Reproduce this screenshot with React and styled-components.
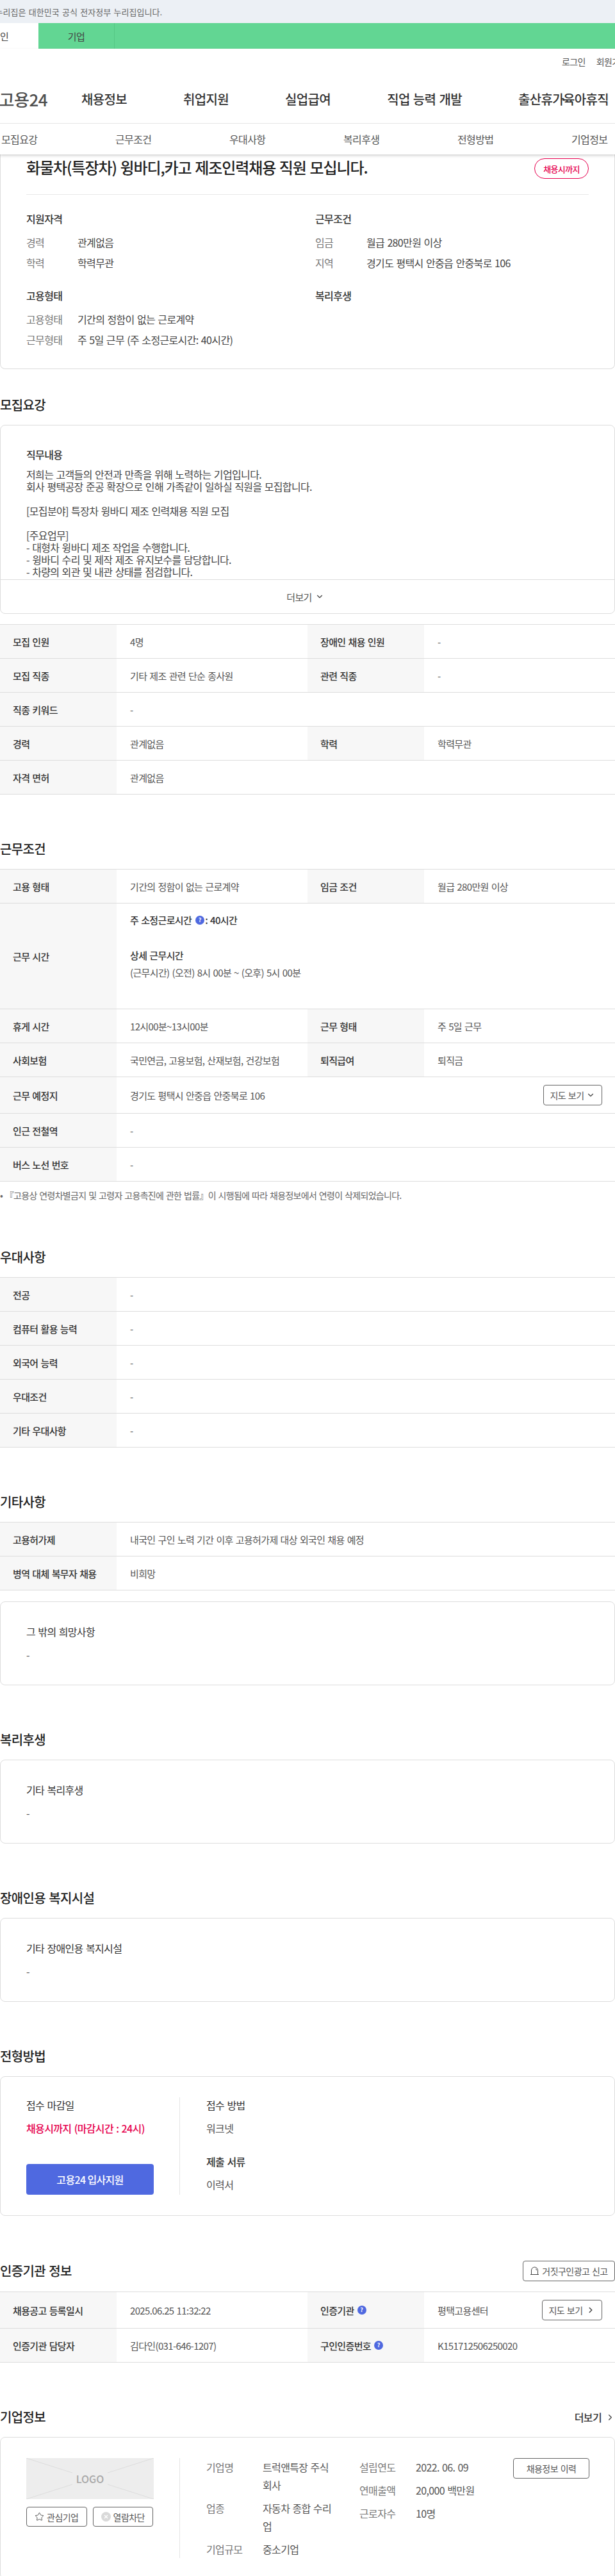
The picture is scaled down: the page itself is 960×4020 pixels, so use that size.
import React from "react";
import styled, { createGlobalStyle } from "styled-components";
import { ChevronDown, ChevronRight, Star } from "lucide-react";

const GlobalStyle = createGlobalStyle`
  html, body {
    margin: 0;
    padding: 0;
    background: #fff;
  }
  body {
    font-family: "Noto Sans CJK KR", "Noto Sans", sans-serif;
    color: #333;
    letter-spacing: -0.04em;
    word-spacing: 0.08em;
  }
  * {
    box-sizing: border-box;
  }
`;

const Page = styled.div`
  width: 960px;
  height: 4020px;
  overflow: hidden;
`;

const Notice = styled.div`
  height: 36px;
  background: #ecf0f5;
  display: flex;
  align-items: center;
  justify-content: flex-end;
  width: 253px;
  font-size: 13px;
  color: #666;
  white-space: nowrap;
  letter-spacing: 0;
  word-spacing: 1.5px;
`;

const NoticeBar = styled.div`
  background: #ecf0f5;
`;

const GreenBar = styled.div`
  height: 40px;
  background: #62d693;
  display: flex;
  margin-left: -60px;
`;

const SiteTab = styled.div`
  width: ${(p) => (p.$active ? "120px" : "119px")};
  display: flex;
  align-items: center;
  justify-content: center;
  font-size: 15px;
  color: #444;
  background: ${(p) => (p.$active ? "#fff" : "transparent")};
  border-right: ${(p) => (p.$active ? "none" : "1px solid #55c885")};
`;

const Header = styled.header`
  position: relative;
  z-index: 2;
  background: #fff;
  box-shadow: 0 2px 4px rgba(0, 0, 0, 0.18);
`;

const Util = styled.div`
  height: 40px;
  display: flex;
  align-items: center;
  gap: 17px;
  padding-left: 877px;
  font-size: 14px;
  color: #555;
  white-space: nowrap;
`;

const MainNav = styled.nav`
  height: 77px;
  display: flex;
  align-items: center;
  gap: 88px;
  border-bottom: 1px solid #e6e6e6;
  white-space: nowrap;
`;

const Logo = styled.div`
  width: 74px;
  margin-right: -35px;
  display: flex;
  justify-content: flex-end;
  font-size: 26px;
  font-weight: 500;
  color: #505050;
  letter-spacing: -0.02em;
`;

const NavItem = styled.span`
  font-size: 20px;
  font-weight: 500;
  color: #333;
`;

const NavDot = styled.span`
  margin: 0 -6px;
`;

const AnchorTabs = styled.div`
  height: 48px;
  display: flex;
  align-items: center;
  gap: 124px;
  padding-left: 2px;
`;

const AnchorTab = styled.span`
  width: 54px;
  font-size: 16px;
  color: #555;
  white-space: nowrap;
`;

const SummaryCard = styled.section`
  height: 335px;
  border: 1px solid #ddd;
  border-top: none;
  border-radius: 0 0 8px 8px;
  padding: 0 40px;
`;

const TitleRow = styled.div`
  height: 63px;
  display: flex;
  justify-content: space-between;
  border-bottom: 1px solid #e8e8e8;
  padding-top: 6px;
`;

const JobTitle = styled.h1`
  margin: 0;
  font-size: 24px;
  line-height: 28px;
  font-weight: 500;
  color: #222;
  letter-spacing: -0.045em;
`;

const Badge = styled.span`
  width: 85px;
  height: 32px;
  border: 1px solid #e6004e;
  border-radius: 16px;
  color: #e6004e;
  font-size: 13px;
  font-weight: 500;
  display: flex;
  align-items: center;
  justify-content: center;
`;

const InfoGrid = styled.div`
  display: grid;
  grid-template-columns: 451px 1fr;
  padding-top: 25px;
  row-gap: 28px;
`;

const InfoBlock = styled.div`
  display: flex;
  flex-direction: column;
  gap: 10px;
`;

const InfoTitle = styled.h3`
  margin: 0 0 4px;
  font-size: 16px;
  line-height: 24px;
  font-weight: 500;
  color: #333;
`;

const InfoRow = styled.div`
  display: flex;
  font-size: 16px;
  line-height: 22px;
  min-height: 22px;
  color: #444;
`;

const InfoLabel = styled.span`
  width: 80px;
  color: #777;
`;

const Section = styled.section`
  margin-top: ${(p) => (p.$first ? "41px" : "70px")};
`;

const SectionHead = styled.div`
  display: flex;
  justify-content: space-between;
  align-items: center;
  margin-bottom: 16px;
`;

const SectionTitle = styled.h2`
  margin: 0;
  font-size: 20px;
  line-height: 30px;
  font-weight: 500;
  color: #222;
`;

const Card = styled.div`
  border: 1px solid #ddd;
  border-radius: 8px;
  margin-top: ${(p) => p.$top || "0"};
`;

const Clipped = styled.div`
  height: 241px;
  overflow: hidden;
  padding: 33px 40px 0;
  border-bottom: 1px solid #ddd;
`;

const CardTitle = styled.h3`
  margin: 0 0 10px;
  font-size: 16px;
  line-height: 24px;
  font-weight: 500;
  color: #333;
`;

const Pre = styled.div`
  font-size: 16px;
  line-height: 19px;
  color: #444;
  white-space: pre;
`;

const More = styled.div`
  height: 52px;
  display: flex;
  align-items: center;
  justify-content: center;
  gap: 5px;
  font-size: 15px;
  color: #555;
  padding-right: 7px;
`;

const Table = styled.div`
  border-top: 1px solid #ddd;
  margin-top: ${(p) => p.$top || "0"};
`;

const Row = styled.div`
  display: grid;
  grid-template-columns: ${(p) => (p.$wide ? "182px 1fr" : "182px 298px 182px 298px")};
  height: ${(p) => p.$h || 53}px;
  border-bottom: 1px solid #ddd;
`;

const Th = styled.div`
  display: flex;
  align-items: center;
  gap: 5px;
  padding-left: 20px;
  background: #f7f7f7;
  font-size: 15px;
  font-weight: 500;
  color: #333;
`;

const Td = styled.div`
  display: flex;
  align-items: center;
  justify-content: space-between;
  padding: 0 20px 0 21px;
  font-size: 15px;
  color: #555;
  white-space: nowrap;
`;

const Hours = styled.div`
  padding: 15px 0 0 21px;
  font-size: 15px;
  line-height: 22px;
  color: #555;
`;

const HoursStrong = styled.div`
  display: flex;
  align-items: center;
  font-weight: 500;
  color: #333;
  margin-bottom: ${(p) => p.$mb || 0}px;
`;

const HelpIcon = styled.span`
  width: 14px;
  height: 14px;
  border-radius: 50%;
  background: #4f69e0;
  color: #fff;
  font-size: 9px;
  font-weight: 700;
  line-height: 14px;
  text-align: center;
  letter-spacing: 0;
`;

const HoursHelp = styled(HelpIcon)`
  margin: 0 1px 0 6px;
`;

const OutlineButton = styled.button`
  height: ${(p) => p.$h || 32}px;
  width: ${(p) => p.$w}px;
  padding: 0;
  display: inline-flex;
  align-items: center;
  justify-content: center;
  gap: ${(p) => p.$gap || 4}px;
  background: #fff;
  border: 1px solid #666;
  border-radius: 4px;
  font-family: inherit;
  font-size: 14px;
  letter-spacing: -0.04em;
  word-spacing: 0.08em;
  color: #555;
  white-space: nowrap;
`;

const Footnote = styled.p`
  margin: 10px 0 0;
  font-size: 14px;
  line-height: 23px;
  letter-spacing: -0.05em;
  color: #666;
  white-space: nowrap;
`;

const SimpleBody = styled.div`
  height: 129px;
  padding: 35px 40px 0;
`;

const SimpleTitle = styled.h3`
  margin: 0 0 14px;
  font-size: 16px;
  line-height: 22px;
  font-weight: 400;
  color: #333;
`;

const Dash = styled.div`
  font-size: 16px;
  line-height: 22px;
  color: #555;
`;

const SplitBody = styled.div`
  display: flex;
  padding: 32px 40px;
`;

const LeftCol = styled.div`
  width: 240px;
  padding-right: 41px;
  border-right: 1px solid #e4e4e4;
  display: flex;
  flex-direction: column;
  justify-content: ${(p) => (p.$spread ? "space-between" : "flex-start")};
  height: ${(p) => p.$h}px;
  flex-shrink: 0;
`;

const RightCol = styled.div`
  padding-left: 41px;
  flex: 1;
  display: flex;
`;

const ApplyLabel = styled.div`
  font-size: 16px;
  line-height: 24px;
  font-weight: ${(p) => (p.$bold ? 500 : 400)};
  color: #333;
  margin-bottom: 12px;
`;

const ApplyValue = styled.div`
  font-size: 16px;
  line-height: 24px;
  color: ${(p) => (p.$red ? "#e6004e" : "#555")};
  font-weight: ${(p) => (p.$red ? 500 : 400)};
  margin-bottom: ${(p) => p.$mb || 0}px;
  white-space: nowrap;
`;

const ApplyButton = styled.button`
  height: 48px;
  width: 199px;
  border: none;
  border-radius: 4px;
  background: #4f69e0;
  color: #fff;
  font-family: inherit;
  font-size: 16px;
  font-weight: 500;
  letter-spacing: -0.04em;
`;

const MoreLink = styled.span`
  display: flex;
  align-items: center;
  gap: 6px;
  font-size: 16px;
  font-weight: 500;
  color: #333;
`;

const LogoBox = styled.div`
  position: relative;
  width: 199px;
  height: 64px;
  background: #ededed;
  display: flex;
  align-items: center;
  justify-content: center;
  font-size: 16px;
  font-weight: 500;
  color: #a8a8a8;
  letter-spacing: 0;
  margin-bottom: 12px;

  svg {
    position: absolute;
    inset: 0;
  }
`;

const LogoText = styled.span`
  position: relative;
`;

const LogoActions = styled.div`
  display: flex;
  gap: 9px;
`;

const CompanyColumn = styled.div`
  width: ${(p) => p.$w}px;
  display: flex;
  flex-direction: column;
  gap: 8px;
  flex-shrink: 0;
`;

const CompanyRow = styled.div`
  display: flex;
  font-size: 16px;
  line-height: 28px;
  color: #555;
`;

const CompanyLabel = styled.span`
  width: 88px;
  flex-shrink: 0;
  color: #777;
`;

const CompanyValue = styled.span`
  width: 108px;
  word-break: break-all;
`;

const CompanyValueWide = styled.span`
  white-space: nowrap;
`;

const InfoData = [
  { title: "지원자격", rows: [["경력", "관계없음"], ["학력", "학력무관"]] },
  { title: "근무조건", rows: [["임금", "월급 280만원 이상"], ["지역", "경기도 평택시 안중읍 안중북로 106"]] },
  { title: "고용형태", rows: [["고용형태", "기간의 정함이 없는 근로계약"], ["근무형태", "주 5일 근무 (주 소정근로시간: 40시간)"]] },
  { title: "복리후생", rows: [] },
];

const jobText = `저희는 고객들의 안전과 만족을 위해 노력하는 기업입니다.
회사 평택공장 준공 확장으로 인해 가족같이 일하실 직원을 모집합니다.

[모집분야] 특장차 윙바디 제조 인력채용 직원 모집

[주요업무]
- 대형차 윙바디 제조 작업을 수행합니다.
- 윙바디 수리 및 제작 제조 유지보수를 담당합니다.
- 차량의 외관 및 내관 상태를 점검합니다.`;

const navItems = ["채용정보", "취업지원", "실업급여", "직업 능력 개발"];
const anchors = ["모집요강", "근무조건", "우대사항", "복리후생", "전형방법", "기업정보"];

const recruitRows = [
  ["모집 인원", "4명", "장애인 채용 인원", "-"],
  ["모집 직종", "기타 제조 관련 단순 종사원", "관련 직종", "-"],
  ["직종 키워드", "-"],
  ["경력", "관계없음", "학력", "학력무관"],
  ["자격 면허", "관계없음"],
];

const preferRows = [
  ["전공", "-"],
  ["컴퓨터 활용 능력", "-"],
  ["외국어 능력", "-"],
  ["우대조건", "-"],
  ["기타 우대사항", "-"],
];

const DataRow = ({ cells }) => (
  <Row $wide={cells.length === 2}>
    {cells.map((c, i) => (i % 2 === 0 ? <Th key={i}>{c}</Th> : <Td key={i}>{c}</Td>))}
  </Row>
);

const BellIcon = () => (
  <svg width="15" height="16" viewBox="0 0 15 16" fill="none" stroke="#444" strokeWidth="1">
    <path d="M2.5 13.5V7a5 5 0 0 1 10 0v6.5" />
    <path d="M1 13.5h13" />
    <path d="M9 4.5a2.5 2.5 0 0 1 1.5 2.5" />
  </svg>
);

const BlockIcon = () => (
  <svg width="15" height="15" viewBox="0 0 15 15">
    <circle cx="7.5" cy="7.5" r="7.5" fill="#d9d9d9" />
    <path d="M5 5l5 5M10 5l-5 5" stroke="#fff" strokeWidth="1.4" />
  </svg>
);

const LogoLines = () => (
  <svg width="199" height="64" viewBox="0 0 199 64" stroke="#dcdcdc" strokeWidth="1">
    <path d="M0 0L72 23M199 0L127 23M0 64L72 41M199 64L127 41" />
  </svg>
);

const App = () => {
  return (
    <Page>
      <GlobalStyle />
      <NoticeBar>
        <Notice>누리집은 대한민국 공식 전자정부 누리집입니다.</Notice>
      </NoticeBar>
      <GreenBar>
        <SiteTab $active>개인</SiteTab>
        <SiteTab>기업</SiteTab>
      </GreenBar>

      <Header>
        <Util>
          <span>로그인</span>
          <span>회원가입</span>
        </Util>
        <MainNav>
          <Logo>고용24</Logo>
          {navItems.map((item) => (
            <NavItem key={item}>{item}</NavItem>
          ))}
          <NavItem>
            출산휴가<NavDot>·</NavDot>육아휴직
          </NavItem>
        </MainNav>
        <AnchorTabs>
          {anchors.map((a) => (
            <AnchorTab key={a}>{a}</AnchorTab>
          ))}
        </AnchorTabs>
      </Header>

      <SummaryCard>
        <TitleRow>
          <JobTitle>화물차(특장차) 윙바디,카고 제조인력채용 직원 모십니다.</JobTitle>
          <Badge>채용시까지</Badge>
        </TitleRow>
        <InfoGrid>
          {InfoData.map((block) => (
            <InfoBlock key={block.title}>
              <InfoTitle>{block.title}</InfoTitle>
              {block.rows.map(([label, value]) => (
                <InfoRow key={label}>
                  <InfoLabel>{label}</InfoLabel>
                  <span>{value}</span>
                </InfoRow>
              ))}
            </InfoBlock>
          ))}
        </InfoGrid>
      </SummaryCard>

      <Section $first>
        <SectionHead>
          <SectionTitle>모집요강</SectionTitle>
        </SectionHead>
        <Card>
          <Clipped>
            <CardTitle>직무내용</CardTitle>
            <Pre>{jobText}</Pre>
          </Clipped>
          <More>
            더보기 <ChevronDown size={14} color="#444" />
          </More>
        </Card>
        <Table $top="16px">
          {recruitRows.map((cells) => (
            <DataRow key={cells[0]} cells={cells} />
          ))}
        </Table>
      </Section>

      <Section>
        <SectionHead>
          <SectionTitle>근무조건</SectionTitle>
        </SectionHead>
        <Table>
          <DataRow cells={["고용 형태", "기간의 정함이 없는 근로계약", "임금 조건", "월급 280만원 이상"]} />
          <Row $wide $h={165}>
            <Th>근무 시간</Th>
            <Hours>
              <HoursStrong $mb={33}>
                주 소정근로시간
                <HoursHelp>?</HoursHelp>
                <span>: 40시간</span>
              </HoursStrong>
              <HoursStrong $mb={5}>상세 근무시간</HoursStrong>
              <div>(근무시간) (오전) 8시 00분 ~ (오후) 5시 00분</div>
            </Hours>
          </Row>
          <DataRow cells={["휴게 시간", "12시00분~13시00분", "근무 형태", "주 5일 근무"]} />
          <DataRow cells={["사회보험", "국민연금, 고용보험, 산재보험, 건강보험", "퇴직급여", "퇴직금"]} />
          <Row $wide $h={57}>
            <Th>근무 예정지</Th>
            <Td>
              경기도 평택시 안중읍 안중북로 106
              <OutlineButton $w={92}>
                지도 보기 <ChevronDown size={14} color="#444" />
              </OutlineButton>
            </Td>
          </Row>
          <DataRow cells={["인근 전철역", "-"]} />
          <DataRow cells={["버스 노선 번호", "-"]} />
        </Table>
        <Footnote>• 『고용상 연령차별금지 및 고령자 고용촉진에 관한 법률』이 시행됨에 따라 채용정보에서 연령이 삭제되었습니다.</Footnote>
      </Section>

      <Section>
        <SectionHead>
          <SectionTitle>우대사항</SectionTitle>
        </SectionHead>
        <Table>
          {preferRows.map((cells) => (
            <DataRow key={cells[0]} cells={cells} />
          ))}
        </Table>
      </Section>

      <Section>
        <SectionHead>
          <SectionTitle>기타사항</SectionTitle>
        </SectionHead>
        <Table>
          <DataRow cells={["고용허가제", "내국인 구인 노력 기간 이후 고용허가제 대상 외국인 채용 예정"]} />
          <DataRow cells={["병역 대체 복무자 채용", "비희망"]} />
        </Table>
        <Card $top="17px">
          <SimpleBody>
            <SimpleTitle>그 밖의 희망사항</SimpleTitle>
            <Dash>-</Dash>
          </SimpleBody>
        </Card>
      </Section>

      <Section>
        <SectionHead>
          <SectionTitle>복리후생</SectionTitle>
        </SectionHead>
        <Card>
          <SimpleBody>
            <SimpleTitle>기타 복리후생</SimpleTitle>
            <Dash>-</Dash>
          </SimpleBody>
        </Card>
      </Section>

      <Section>
        <SectionHead>
          <SectionTitle>장애인용 복지시설</SectionTitle>
        </SectionHead>
        <Card>
          <SimpleBody>
            <SimpleTitle>기타 장애인용 복지시설</SimpleTitle>
            <Dash>-</Dash>
          </SimpleBody>
        </Card>
      </Section>

      <Section>
        <SectionHead>
          <SectionTitle>전형방법</SectionTitle>
        </SectionHead>
        <Card>
          <SplitBody>
            <LeftCol $spread $h={152}>
              <div>
                <ApplyLabel>접수 마감일</ApplyLabel>
                <ApplyValue $red>채용시까지 (마감시간 : 24시)</ApplyValue>
              </div>
              <ApplyButton>고용24 입사지원</ApplyButton>
            </LeftCol>
            <RightCol>
              <div>
                <ApplyLabel>접수 방법</ApplyLabel>
                <ApplyValue $mb={28}>워크넷</ApplyValue>
                <ApplyLabel $bold>제출 서류</ApplyLabel>
                <ApplyValue>이력서</ApplyValue>
              </div>
            </RightCol>
          </SplitBody>
        </Card>
      </Section>

      <Section>
        <SectionHead>
          <SectionTitle>인증기관 정보</SectionTitle>
          <OutlineButton $w={144}>
            <BellIcon /> 거짓구인광고 신고
          </OutlineButton>
        </SectionHead>
        <Table>
          <Row $h={57}>
            <Th>채용공고 등록일시</Th>
            <Td>2025.06.25 11:32:22</Td>
            <Th>
              인증기관 <HelpIcon>?</HelpIcon>
            </Th>
            <Td>
              평택고용센터
              <OutlineButton $w={94} $gap={6}>
                지도 보기 <ChevronRight size={14} color="#444" strokeWidth={2.5} />
              </OutlineButton>
            </Td>
          </Row>
          <Row>
            <Th>인증기관 담당자</Th>
            <Td>김다인(031-646-1207)</Td>
            <Th>
              구인인증번호 <HelpIcon>?</HelpIcon>
            </Th>
            <Td>K151712506250020</Td>
          </Row>
        </Table>
      </Section>

      <Section>
        <SectionHead>
          <SectionTitle>기업정보</SectionTitle>
          <MoreLink>
            더보기 <ChevronRight size={15} color="#444" />
          </MoreLink>
        </SectionHead>
        <Card>
          <SplitBody>
            <LeftCol $h={156}>
              <LogoBox>
                <LogoLines />
                <LogoText>LOGO</LogoText>
              </LogoBox>
              <LogoActions>
                <OutlineButton $w={95} $h={31}>
                  <Star size={15} color="#444" strokeWidth={1.4} /> 관심기업
                </OutlineButton>
                <OutlineButton $w={95} $h={31}>
                  <BlockIcon /> 열람차단
                </OutlineButton>
              </LogoActions>
            </LeftCol>
            <RightCol>
              <CompanyColumn $w={239}>
                <CompanyRow>
                  <CompanyLabel>기업명</CompanyLabel>
                  <CompanyValue>트럭앤특장 주식회사</CompanyValue>
                </CompanyRow>
                <CompanyRow>
                  <CompanyLabel>업종</CompanyLabel>
                  <CompanyValue>자동차 종합 수리업</CompanyValue>
                </CompanyRow>
                <CompanyRow>
                  <CompanyLabel>기업규모</CompanyLabel>
                  <CompanyValue>중소기업</CompanyValue>
                </CompanyRow>
              </CompanyColumn>
              <CompanyColumn $w={240}>
                <CompanyRow>
                  <CompanyLabel>설립연도</CompanyLabel>
                  <CompanyValueWide>2022. 06. 09</CompanyValueWide>
                </CompanyRow>
                <CompanyRow>
                  <CompanyLabel>연매출액</CompanyLabel>
                  <CompanyValueWide>20,000 백만원</CompanyValueWide>
                </CompanyRow>
                <CompanyRow>
                  <CompanyLabel>근로자수</CompanyLabel>
                  <CompanyValueWide>10명</CompanyValueWide>
                </CompanyRow>
              </CompanyColumn>
              <OutlineButton $w={119}>채용정보 이력</OutlineButton>
            </RightCol>
          </SplitBody>
        </Card>
      </Section>
    </Page>
  );
};

export default App;
